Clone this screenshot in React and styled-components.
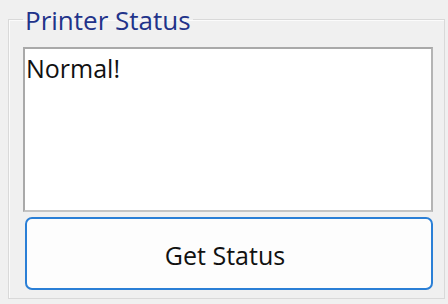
import React from "react";
import styled, { createGlobalStyle } from "styled-components";

const Global = createGlobalStyle`
  html, body { margin: 0; padding: 0; background: #f0f0f0; }
  body { width: 448px; height: 304px; overflow: hidden; font-family: "Open Sans", "Noto Sans", sans-serif; }
`;

const Group = styled.fieldset`
  box-sizing: border-box;
  width: 437px;
  height: 295px;
  margin: 4px 0 0 8px;
  padding: 0 11px 7px 14px;
  border: 1px solid #d9d9d9;
  box-shadow: inset 1px 1px 0 #fbfbfb;
  display: flex;
  flex-direction: column;
  gap: 5px;
  min-width: 0;
`;

const Legend = styled.legend`
  margin-left: 0;
  padding: 0 2px;
  font-size: 26px;
  line-height: 30px;
  color: #22338a;
  transform: translateY(1px);
`;

const TextBox = styled.div`
  box-sizing: border-box;
  height: 165px;
  margin-top: 13px;
  background: #fff;
  border: 2px solid #a9a9a9;
  border-right-color: #b4b4b4;
  border-bottom-color: #c4c4c4;
  padding: 4px 1px;
  font-size: 25px;
  line-height: 30px;
  color: #111;
`;

const Button = styled.button`
  box-sizing: border-box;
  height: 73px;
  margin-left: 2px;
  background: #fdfdfd;
  border: 2px solid #2a7fd6;
  border-radius: 7px;
  font-family: inherit;
  font-size: 25px;
  color: #111;
  padding: 3px 8px 0 0;
`;

export default function App() {
  return (
    <>
      <Global />
      <Group>
        <Legend>Printer Status</Legend>
        <TextBox>Normal!</TextBox>
        <Button>Get Status</Button>
      </Group>
    </>
  );
}
